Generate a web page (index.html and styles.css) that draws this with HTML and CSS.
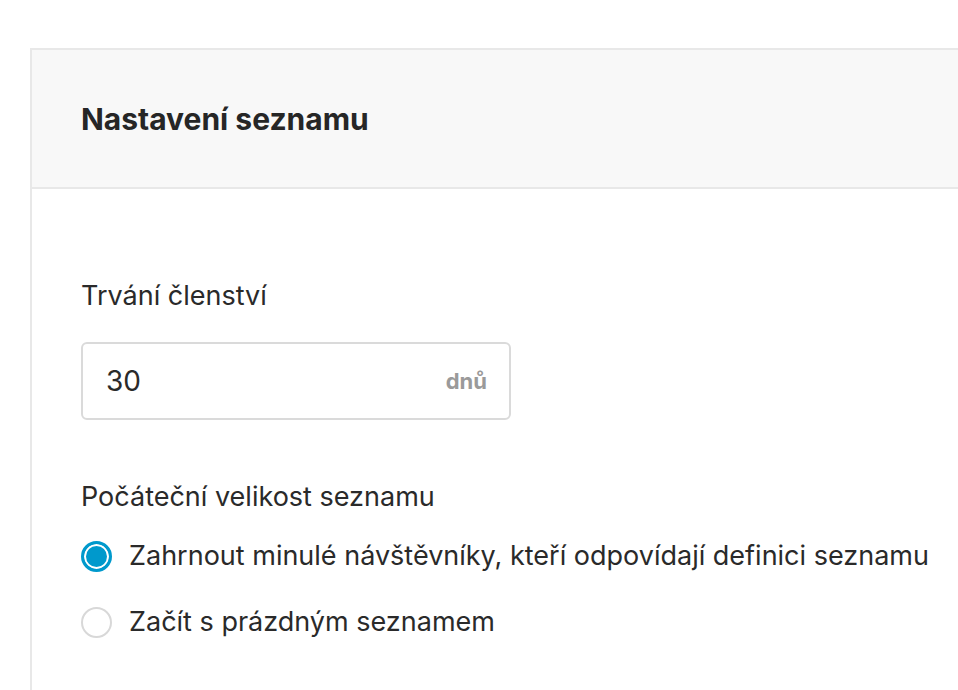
FILE: index.html
```html
<!DOCTYPE html>
<html lang="cs">
<head>
<meta charset="utf-8">
<link rel="stylesheet" href="styles.css">
</head>
<body>
<section class="card">
  <header class="card-head">
    <h2 class="title">Nastavení seznamu</h2>
  </header>
  <div class="card-body">
    <div class="field">
      <label class="label">Trvání členství</label>
      <div class="input">
        <span class="value">30</span>
        <span class="unit">dnů</span>
      </div>
    </div>
    <div class="field">
      <div class="label">Počáteční velikost seznamu</div>
      <div class="radios">
        <div class="radio-row">
          <span class="radio checked"></span>
          <span class="radio-text">Zahrnout minulé návštěvníky, kteří odpovídají definici seznamu</span>
        </div>
        <div class="radio-row">
          <span class="radio"></span>
          <span class="radio-text">Začít s prázdným seznamem</span>
        </div>
      </div>
    </div>
  </div>
</section>
</body>
</html>
```
FILE: styles.css
```css
html, body {
  margin: 0;
  padding: 0;
  background: #ffffff;
}
body {
  font-family: Inter, "Noto Sans", sans-serif;
  color: #2a2a2a;
  overflow: hidden;
  height: 690px;
}
.card {
  margin: 48px 0 0 30px;
  width: 1000px;
  border: 2px solid #e8e8e8;
  border-right: none;
  box-sizing: border-box;
  min-height: 700px;
}
.card-head {
  height: 139px;
  box-sizing: border-box;
  background: #f8f8f8;
  border-bottom: 2px solid #e8e8e8;
  display: flex;
  align-items: center;
  padding: 0 49px;
}
.title {
  margin: 0;
  font-size: 30px;
  font-weight: 700;
  color: #262626;
}
.card-body {
  padding: 90px 48px 0 49px;
}
.field {
  display: flex;
  flex-direction: column;
}
.field + .field {
  margin-top: 60px;
}
.label {
  font-size: 27px;
  line-height: 34px;
  color: #2a2a2a;
}
.input {
  margin-top: 29px;
  width: 430px;
  height: 78px;
  box-sizing: border-box;
  border: 2px solid #dadada;
  border-radius: 6px;
  display: flex;
  align-items: center;
  justify-content: space-between;
  padding: 0 22px 0 23px;
}
.value {
  font-size: 28px;
}
.unit {
  font-size: 22px;
  font-weight: 700;
  color: #9a9a9a;
}
.radios {
  margin-top: 26px;
  display: flex;
  flex-direction: column;
  gap: 34px;
}
.radio-row {
  display: flex;
  align-items: center;
  gap: 17px;
  font-size: 27px;
  line-height: 32px;
}
.radio {
  width: 31px;
  height: 31px;
  box-sizing: border-box;
  border: 2px solid #d8d8d8;
  border-radius: 50%;
  flex: none;
  background: #fff;
}
.radio.checked {
  border: 3px solid #0099cc;
  background: #0099cc;
  box-shadow: inset 0 0 0 2px #fff;
}
```
